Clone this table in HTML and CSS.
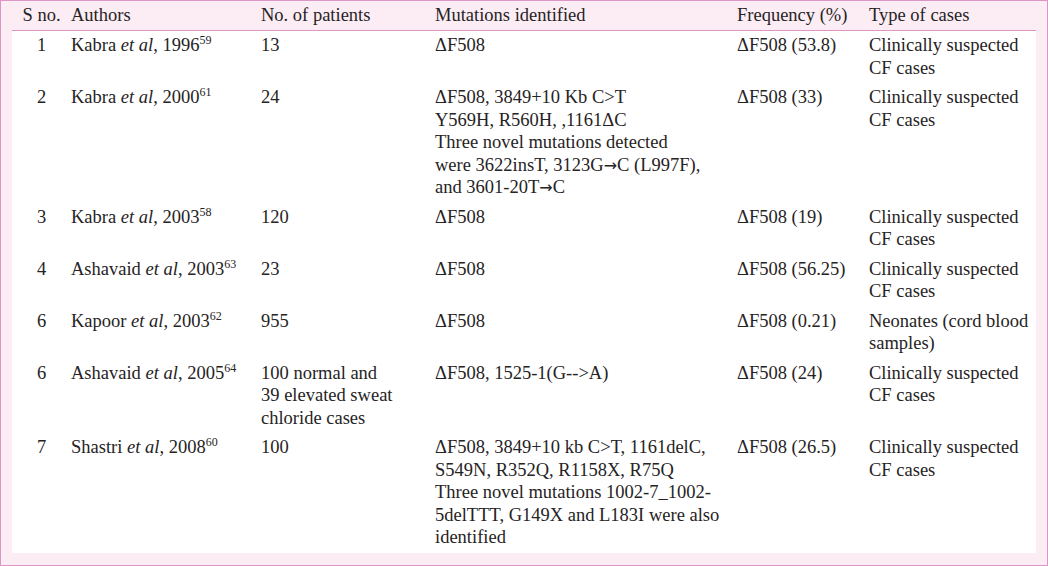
FILE: index.html
```html
<!DOCTYPE html>
<html>
<head>
<meta charset="utf-8">
<link rel="stylesheet" href="styles.css">
</head>
<body>
<div class="frame">
<table class="data">
<colgroup>
<col class="c-no"><col class="c-auth"><col class="c-pat"><col class="c-mut"><col class="c-freq"><col class="c-type">
</colgroup>
<thead>
<tr>
<th class="num">S no.</th>
<th>Authors</th>
<th>No. of patients</th>
<th>Mutations identified</th>
<th>Frequency (%)</th>
<th>Type of cases</th>
</tr>
</thead>
<tbody>
<tr>
<td class="num">1</td>
<td>Kabra <i>et al</i>, 1996<sup>59</sup></td>
<td>13</td>
<td>ΔF508</td>
<td>ΔF508 (53.8)</td>
<td>Clinically suspected<br>CF cases</td>
</tr>
<tr>
<td class="num">2</td>
<td>Kabra <i>et al</i>, 2000<sup>61</sup></td>
<td>24</td>
<td>ΔF508, 3849+10 Kb C&gt;T<br>Y569H, R560H, ,1161ΔC<br>Three novel mutations detected<br>were 3622insT, 3123G<span class="arrow">→</span>C (L997F),<br>and 3601-20T<span class="arrow">→</span>C</td>
<td>ΔF508 (33)</td>
<td>Clinically suspected<br>CF cases</td>
</tr>
<tr>
<td class="num">3</td>
<td>Kabra <i>et al</i>, 2003<sup>58</sup></td>
<td>120</td>
<td>ΔF508</td>
<td>ΔF508 (19)</td>
<td>Clinically suspected<br>CF cases</td>
</tr>
<tr>
<td class="num">4</td>
<td>Ashavaid <i>et al</i>, 2003<sup>63</sup></td>
<td>23</td>
<td>ΔF508</td>
<td>ΔF508 (56.25)</td>
<td>Clinically suspected<br>CF cases</td>
</tr>
<tr>
<td class="num">6</td>
<td>Kapoor <i>et al</i>, 2003<sup>62</sup></td>
<td>955</td>
<td>ΔF508</td>
<td>ΔF508 (0.21)</td>
<td>Neonates (cord blood<br>samples)</td>
</tr>
<tr>
<td class="num">6</td>
<td>Ashavaid <i>et al</i>, 2005<sup>64</sup></td>
<td>100 normal and<br>39 elevated sweat<br>chloride cases</td>
<td>ΔF508, 1525-1(G--&gt;A)</td>
<td>ΔF508 (24)</td>
<td>Clinically suspected<br>CF cases</td>
</tr>
<tr>
<td class="num">7</td>
<td>Shastri <i>et al</i>, 2008<sup>60</sup></td>
<td>100</td>
<td>ΔF508, 3849+10 kb C&gt;T, 1161delC,<br>S549N, R352Q, R1158X, R75Q<br>Three novel mutations 1002-7_1002-<br>5delTTT, G149X and L183I were also<br>identified</td>
<td>ΔF508 (26.5)</td>
<td>Clinically suspected<br>CF cases</td>
</tr>
</tbody>
</table>
</div>
</body>
</html>
```

FILE: styles.css
```css
html, body {
  margin: 0;
  padding: 0;
  background: #ffffff;
}

.frame {
  box-sizing: border-box;
  width: 1048px;
  height: 566px;
  border: 1px solid #dc95c4;
  background: #fcedf5;
  padding: 0 11px;
  font-family: "Liberation Serif", "Times New Roman", serif;
  font-size: 18.5px;
  color: #262324;
}

.data {
  width: 1024px;
  border-collapse: collapse;
  table-layout: fixed;
}

.c-no { width: 59px; }
.c-auth { width: 190px; }
.c-pat { width: 174px; }
.c-mut { width: 302px; }
.c-freq { width: 132px; }
.c-type { width: 167px; }

.data th,
.data td {
  padding: 3px 0 4px 0;
  line-height: 22.5px;
  text-align: left;
  vertical-align: top;
  font-weight: normal;
  white-space: nowrap;
}

.data th {
  padding: 3px 0 3.5px 0;
  border-bottom: 1px solid #dc95c4;
}

.data tbody td {
  background: #ffffff;
}

.data .num {
  text-align: center;
}

.data sup {
  font-size: 12px;
  line-height: 0;
  vertical-align: 7px;
}

.arrow {
  font-family: "DejaVu Sans", sans-serif;
  font-size: 16px;
  line-height: 0;
}
```
